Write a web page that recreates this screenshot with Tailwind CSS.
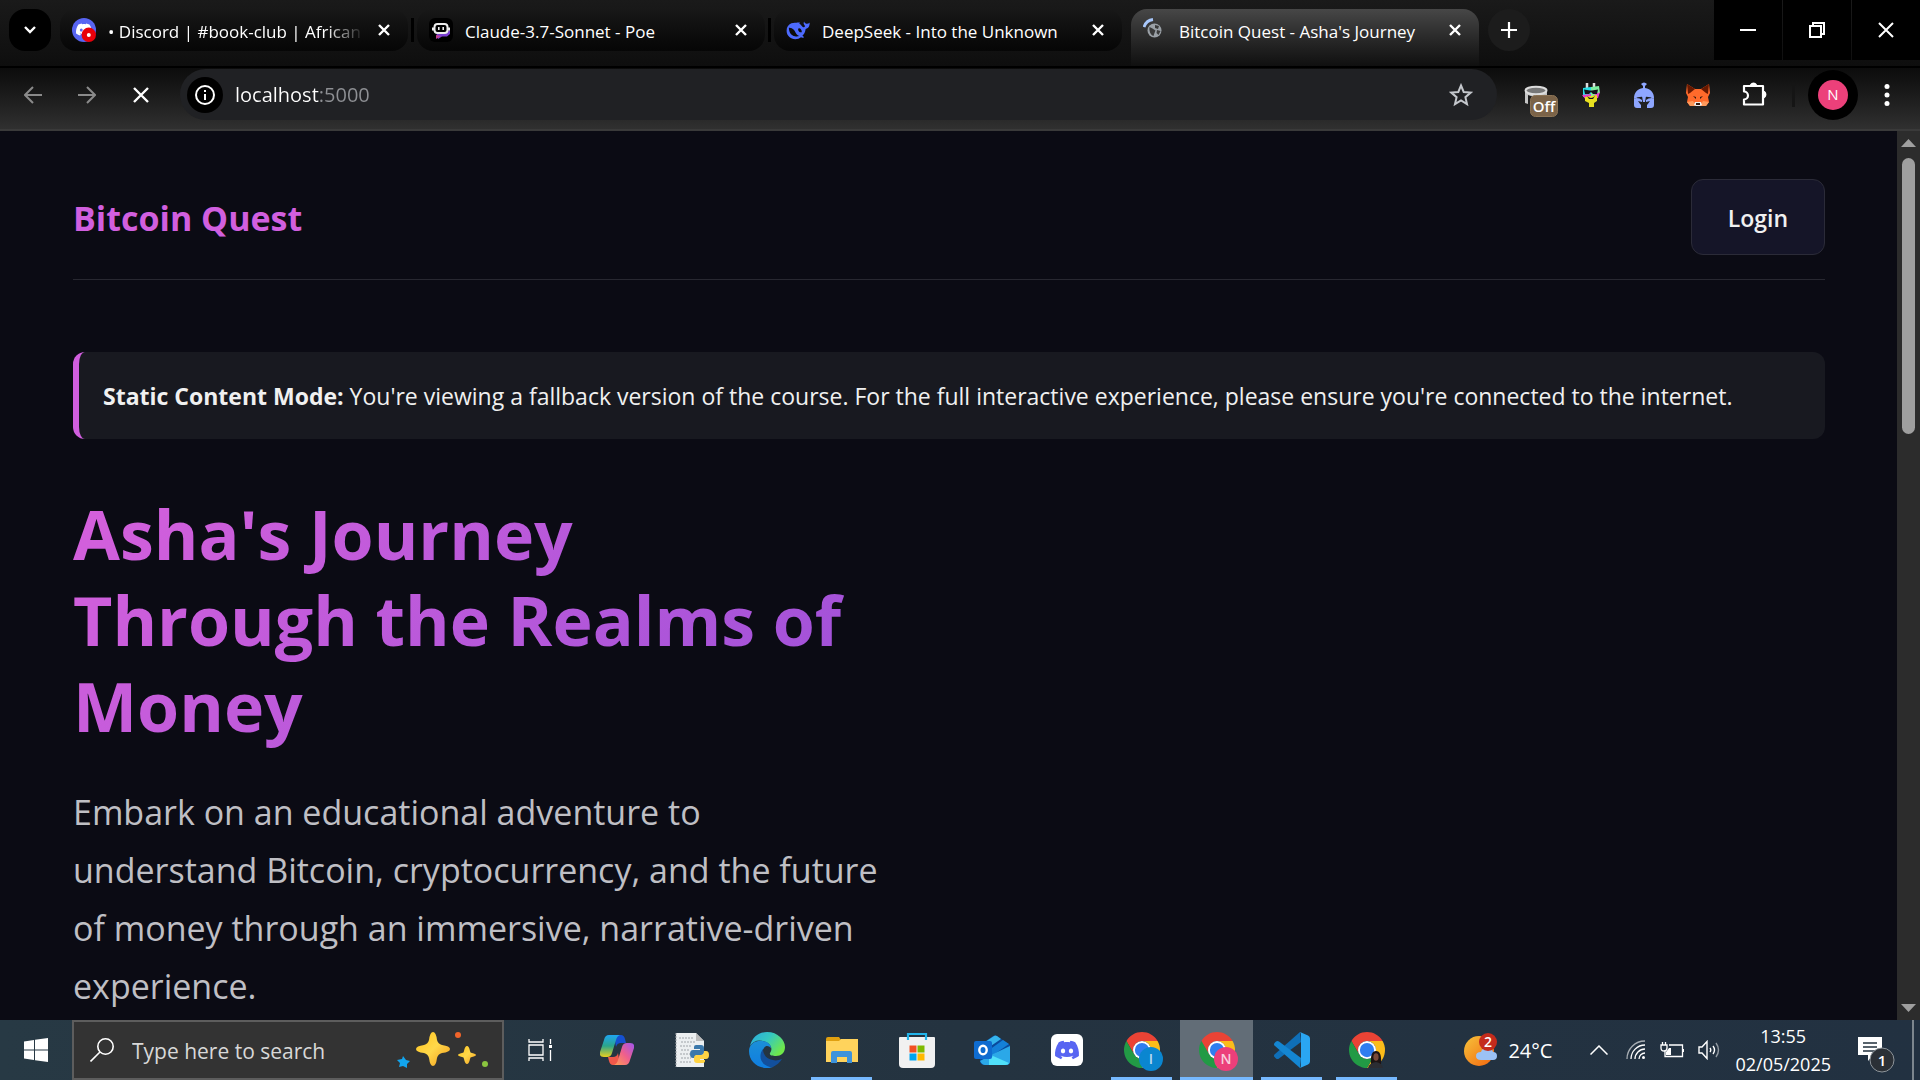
<!DOCTYPE html>
<html lang="en">
<head>
<meta charset="utf-8">
<title>Bitcoin Quest - Asha's Journey</title>
<script src="https://cdn.jsdelivr.net/npm/@tailwindcss/browser@4"></script>
</head>
<body class="flex h-screen flex-col overflow-hidden bg-[#0b0b14] font-['Segoe_UI','Open_Sans',sans-serif] text-white">

<!-- Tab strip -->
<div class="flex h-[68px] shrink-0 flex-col border-b border-black bg-linear-to-b from-[#1a1a1a] to-[#0e0e0e]">
  <div class="flex flex-1 items-start border-b border-black pl-[9px]">
    <button aria-label="Search tabs" class="mt-[9px] mr-[9px] grid size-[42px] shrink-0 place-items-center rounded-2xl bg-black">
      <svg width="14" height="10" viewBox="0 0 14 10" fill="none" stroke="#fff" stroke-width="2.4"><path d="M2 2l5 5 5-5"/></svg>
    </button>
    <div role="tablist" class="flex">
      <div role="tab" class="mt-[9px] flex h-[42px] w-[348px] items-center rounded-2xl bg-linear-to-b from-[#181818] to-[#060606] px-3">
        <svg class="mr-3 shrink-0" width="24" height="24" viewBox="0 0 24 24"><circle cx="12" cy="12" r="12" fill="#5865f2"/><use href="#discord" fill="#fff" transform="translate(4 3.500) scale(.66)"/><circle cx="16.800" cy="16.800" r="7.200" fill="#e8000b"/><circle cx="16.800" cy="17" r="2" fill="#fff"/></svg>
        <span class="flex-1 pt-[3px] text-[17px] leading-6 whitespace-nowrap mask-r-from-85% mask-r-to-100%">• Discord | #book-club | African</span>
        <button aria-label="Close tab" class="ml-2 grid size-6 shrink-0 place-items-center"><svg width="14" height="14" viewBox="0 0 14 14" stroke="#fff" stroke-width="2.400"><path d="M2 2l10 10M12 2L2 12"/></svg></button>
      </div>
      <div class="mx-[3px] mt-[18px] h-6 w-[3px] bg-black"></div>
      <div role="tab" class="mt-[9px] flex h-[42px] w-[348px] items-center rounded-2xl bg-linear-to-b from-[#181818] to-[#060606] px-3">
        <svg class="mr-3 shrink-0" width="24" height="24" viewBox="0 0 24 24"><rect width="24" height="24" rx="6" fill="#000"/><path d="M7 14h11l3-2v4l-3 2.500h-5l-4 2.500z" fill="#7a3fd0"/><path d="M7 17v4l5-3z" fill="#c0408f"/><rect x="5.500" y="6" width="13" height="9" rx="3" fill="none" stroke="#eee" stroke-width="2"/><path d="M4 9.500v3M20 9.500v3" stroke="#eee" stroke-width="2"/><path d="M9.800 9v3M14.200 9v3" stroke="#eee" stroke-width="1.600"/></svg>
        <span class="flex-1 pt-[3px] text-[17px] leading-6 whitespace-nowrap">Claude-3.7-Sonnet - Poe</span>
        <button aria-label="Close tab" class="ml-2 grid size-6 shrink-0 place-items-center"><svg width="14" height="14" viewBox="0 0 14 14" stroke="#fff" stroke-width="2.400"><path d="M2 2l10 10M12 2L2 12"/></svg></button>
      </div>
      <div class="mx-[3px] mt-[18px] h-6 w-[3px] bg-black"></div>
      <div role="tab" class="mt-[9px] flex h-[42px] w-[348px] items-center rounded-2xl bg-linear-to-b from-[#181818] to-[#060606] px-3">
        <svg class="mr-3 shrink-0" width="24" height="24" viewBox="0 0 24 24"><path fill="#4d6bfe" fill-rule="evenodd" d="M23.700 4.800c-.300-.100-.500.200-1.400.800-1 .300-2 .100-2.900-.400-.700-.400-1-.800-1.200-1.800-.600.800-.700 1.900-.300 2.900.300.800.800 1.300 1.200 1.700-.400.900-.900 1.300-1.700 1.200-1.300-.200-2.100-2.700-4.200-3.800l.9-.7c-1-.3-2.400-.3-3.800.1-1.600-.2-3.500-.1-4.900.5C2.200 6.700.6 9.300.6 12.700c0 4.900 3.900 8.500 8.700 8.500 2.300 0 4.200-.7 5.700-1.900.7.5 2.100.5 2.700.1.400-.3.200-.7-.3-.9-.6-.3-.8-.5-1-.7 1.600-1.600 2.700-3.500 3-5.600.1-1.100.4-1.600 1.400-1.800 2-.6 2.900-2.500 2.900-5.600zM13.300 18c-3.500-1.200-3.800-4.300-5.500-6.200-1.400-1.600-3-2.300-4.900-2.100-.1 4.500 2.300 7.700 6.100 8.600 1.500.3 3 .2 4.300-.3zm2.500-3.800c-1.600.6-3.300-.6-3.600-2.300-.2-.9.1-1.700.9-1.600 1.500.1 2.900 1.900 2.700 3.900z"/></svg>
        <span class="flex-1 pt-[3px] text-[17px] leading-6 whitespace-nowrap">DeepSeek - Into the Unknown</span>
        <button aria-label="Close tab" class="ml-2 grid size-6 shrink-0 place-items-center"><svg width="14" height="14" viewBox="0 0 14 14" stroke="#fff" stroke-width="2.400"><path d="M2 2l10 10M12 2L2 12"/></svg></button>
      </div>
      <div role="tab" aria-selected="true" class="mt-[9px] ml-[9px] flex h-[57px] w-[348px] items-center rounded-t-2xl bg-linear-to-b from-[#474747] to-[#101010] px-3 pb-[15px]">
        <svg class="mr-3 shrink-0" width="24" height="24" viewBox="0 0 24 24"><path d="M1 9A11 11 0 0 1 10 1.500" fill="none" stroke="#a8c7fa" stroke-width="2.800"/><circle cx="11.500" cy="12.500" r="7" fill="#9aa0a6"/><path d="M6.500 9l3 1.500 3 2-1 2.500-1 3c-3-1-4.500-5-4-9zM12 7l4 1-1 3-3-1zM14 12l3.500 1-2 4-2-2z" fill="#3a3a3a"/></svg>
        <span class="flex-1 pt-[3px] text-[17px] leading-6 whitespace-nowrap">Bitcoin Quest - Asha's Journey</span>
        <button aria-label="Close tab" class="ml-2 grid size-6 shrink-0 place-items-center"><svg width="14" height="14" viewBox="0 0 14 14" stroke="#fff" stroke-width="2.400"><path d="M2 2l10 10M12 2L2 12"/></svg></button>
      </div>
    </div>
    <button aria-label="New tab" class="mt-[9px] ml-[9px] grid size-[42px] place-items-center rounded-full bg-[#1c1c1c]">
      <svg width="16" height="16" viewBox="0 0 16 16" stroke="#fff" stroke-width="2.200"><path d="M8 0v16M0 8h16"/></svg>
    </button>
    <div class="ml-auto flex h-[60px] gap-px">
      <button aria-label="Minimise" class="grid w-[68px] place-items-center bg-black"><svg width="16" height="16" viewBox="0 0 16 16"><path d="M0 7h16v2H0z" fill="#fff"/></svg></button>
      <button aria-label="Restore" class="grid w-[68px] place-items-center bg-black"><svg width="16" height="16" viewBox="0 0 16 16" fill="none" stroke="#fff" stroke-width="2"><path d="M1 4h11v11H1zM4 4V1h11v11h-3"/></svg></button>
      <button aria-label="Close" class="grid w-[68px] place-items-center bg-black"><svg width="16" height="16" viewBox="0 0 16 16" stroke="#fff" stroke-width="2"><path d="M1 1l14 14M15 1L1 15"/></svg></button>
    </div>
  </div>
</div>

<!-- Toolbar -->
<div class="flex h-[63px] shrink-0 items-start border-b-2 border-[#3a3a3a] bg-linear-to-b from-[#0c0c0c] to-[#303030] pt-px pr-6 pl-[6px]">
  <div class="flex h-[51px] w-[174px] shrink-0">
    <button aria-label="Back" class="grid w-[54px] place-items-center"><svg width="18" height="18" viewBox="0 0 18 18" fill="none" stroke="#8a8a8a" stroke-width="2"><path d="M18 9H1M9 1L1 9l8 8"/></svg></button>
    <button aria-label="Forward" class="grid w-[54px] place-items-center"><svg width="18" height="18" viewBox="0 0 18 18" fill="none" stroke="#8a8a8a" stroke-width="2"><path d="M0 9h17M9 1l8 8-8 8"/></svg></button>
    <button aria-label="Stop loading" class="grid w-[54px] place-items-center"><svg width="16" height="16" viewBox="0 0 16 16" stroke="#fff" stroke-width="2.400"><path d="M1 1l14 14M15 1L1 15"/></svg></button>
  </div>
  <div class="flex h-[51px] flex-1 items-center rounded-full bg-[#202124] pr-[24px] pl-[7px]">
    <button aria-label="Site information" class="grid size-9 shrink-0 place-items-center rounded-full bg-black">
      <svg width="20" height="20" viewBox="0 0 20 20" fill="none" stroke="#fff" stroke-width="2"><circle cx="10" cy="10" r="9"/><path d="M10 9v6M10 5v2"/></svg>
    </button>
    <input aria-label="Address" value="localhost:5000" class="ml-3 min-w-0 flex-1 bg-linear-to-r from-white from-[84px] to-[#8e9094] to-[84px] bg-clip-text text-xl text-transparent outline-none">
    <button aria-label="Bookmark this tab" class="grid size-6 shrink-0 place-items-center"><svg width="24" height="24" viewBox="0 0 24 24" fill="none" stroke="#c4c7cc" stroke-width="2"><path d="M12 2.500l2.700 6.500 7 .600-5.300 4.600 1.600 6.900-6-3.700-6 3.700 1.600-6.900-5.300-4.600 7-.600z"/></svg></button>
  </div>
  <div class="ml-[13px] flex h-[51px] items-center">
    <button aria-label="Extension, off" class="flex w-[54px] justify-end pt-3 pr-[5px]">
      <svg width="36" height="34" viewBox="0 0 36 34"><path d="M2 7v12l3 1V11q8 4 19 0V7z" fill="#c4c4c4"/><ellipse cx="13" cy="6.500" rx="10.500" ry="3.800" fill="#777" stroke="#ddd" stroke-width="2"/><rect x="7.500" y="11.500" width="27" height="21" rx="5" fill="#7b6348" stroke="#8b7355"/><text x="21" y="27.500" font-size="15" font-weight="600" fill="#fff" text-anchor="middle">Off</text></svg>
    </button>
    <button aria-label="Rainbow llama extension" class="grid w-[53px] place-items-center">
      <svg width="20" height="26" viewBox="0 0 20 26"><path d="M6 1v6M13 1v6" stroke="#ddd" stroke-width="2.500"/><path d="M2 6l8-1v8l-8 2z" fill="#25e0e8"/><path d="M10 5l8-1 1 7-9 4z" fill="#7df0a0"/><path d="M1 13l4 5 5-1V12zM19 10l-2 6-5 1 1-4z" fill="#e63cc8"/><path d="M4 15l12-2v6l-3 2v4H8v-4l-4-2z" fill="#e8e020"/><path d="M3 7.500l6 1h2l6-1-1 4.500h-4l-2-2-2 2H4zM6 14q4 4 8 0l-2 3H8z" fill="#14141c"/></svg>
    </button>
    <button aria-label="Helmet wallet extension" class="grid w-[54px] place-items-center">
      <svg width="22" height="26" viewBox="0 0 22 26"><path fill="#8ea6ff" d="M8 2q3-3 6 0l-2 2v2c6 1 9 5 9 10v1q-5-3-10-2-5-1-10 2v-1c0-5 3-9 9-10V4z"/><path fill="#8ea6ff" d="M1 17l2-1q4 0 6 2v2l-4-1q2 3 3 4v3H4q-3 0-3-3zM21 17l-2-1q-4 0-6 2v2l4-1q-2 3-3 4v3h4q3 0 3-3zM9 14h4l-1 6h-2z"/></svg>
    </button>
    <button aria-label="Fox wallet extension" class="grid w-[54px] place-items-center">
      <svg width="24" height="24" viewBox="0 0 24 24"><path d="M1 1l8 5h6l8-5 1 9-2 4 1 5-3 4-5-1-3 1-3-1-5 1-3-4 1-5-2-4z" fill="#ff6a2b"/><path d="M1 1l8 5-5 4-2 1zM23 1l-8 5 5 4 2 1z" fill="#661800"/><path d="M1 19l6-1 3 5-6 0zM23 19l-6-1-3 5 6 0z" fill="#ff9a5c"/><path d="M9 19h6l1 3-2 1h-4l-2-1z" fill="#eee"/><path d="M10 20h4v2h-4zM7 13l3 1v2zM17 13l-3 1v2z" fill="#331a10"/></svg>
    </button>
    <button aria-label="Extensions" class="grid w-[57px] place-items-center">
      <svg width="26" height="26" viewBox="0 0 26 26" fill="none" stroke="#fff" stroke-width="2.200" stroke-linejoin="round"><path d="M3 4h19v18.500H3v-5a4 4 0 0 0 0-8z"/><path d="M10 3a3 3 0 0 1 5 0zM23 10a3 3 0 0 1 0 5z" fill="#fff"/></svg>
    </button>
    <div class="mr-[13px] ml-[10px] h-6 w-[3px] bg-[#151515]"></div>
    <button aria-label="Profile N" class="grid size-[50px] place-items-center rounded-full bg-black"><span class="grid size-[30px] place-items-center rounded-full bg-[#ec407a] text-[15px]">N</span></button>
    <button aria-label="Menu" class="ml-5 grid w-[18px] place-items-center"><svg width="6" height="24" viewBox="0 0 6 24" fill="#fff"><circle cx="3" cy="3.500" r="2.500"/><circle cx="3" cy="12" r="2.500"/><circle cx="3" cy="20.500" r="2.500"/></svg></button>
  </div>
</div>

<!-- Page -->
<div class="flex min-h-0 flex-1">
  <div class="min-w-0 flex-1 overflow-hidden pt-[24px] pr-[72px] pl-[73px] text-[#f0f0f0]">
    <header class="flex items-center justify-between border-b border-[#282831] py-6">
      <a href="#" class="pt-[2px] text-[34px] leading-[58px] font-bold text-[#d15fdf]">Bitcoin Quest</a>
      <button class="rounded-xl border border-[#2b2b38] bg-[#151528] px-9 pt-5 pb-[18px] text-[23px] leading-9 font-semibold">Login</button>
    </header>
    <div role="status" class="mt-[72px] rounded-xl border-l-6 border-[#d15fdf] bg-[#181920] px-6 pt-[25px] pb-[23px] text-[23px] leading-[39px]"><strong>Static Content Mode:</strong> You're viewing a fallback version of the course. For the full interactive experience, please ensure you're connected to the internet.</div>
    <main class="mt-12 grid grid-cols-2 gap-30">
      <div>
        <h1 class="bg-linear-135 from-[#d660dc] to-[#9b4fd8] bg-clip-text pt-1 pr-6 text-[68px] leading-[86px] font-bold text-transparent">Asha's Journey Through the Realms of Money</h1>
        <p class="mt-[34px] text-[34px] leading-[58px] text-[#bfbfc4]">Embark on an educational adventure to understand Bitcoin, cryptocurrency, and the future of money through an immersive, narrative-driven experience.</p>
      </div>
    </main>
  </div>
  <div class="flex w-[23px] shrink-0 flex-col items-center bg-[#2c2c2c] py-2">
    <svg width="15" height="8" viewBox="0 0 15 8" fill="#9f9f9f"><path d="M7.500 0L15 8H0z"/></svg>
    <div class="my-[11px] flex w-full flex-1 justify-center"><div class="h-[33%] w-[13px] rounded-full bg-[#9f9f9f]"></div></div>
    <svg width="15" height="8" viewBox="0 0 15 8" fill="#9f9f9f"><path d="M0 0h15L7.500 8z"/></svg>
  </div>
</div>

<!-- Taskbar -->
<footer class="flex h-[60px] shrink-0 bg-linear-to-r from-[#273944] via-[#243340] to-[#223141]">
  <button aria-label="Start" class="grid w-[72px] shrink-0 place-items-center"><svg width="24" height="24" viewBox="0 0 24 24" fill="#fff"><path d="M0 3.500L10 2v9.500H0zM11 1.800L24 0v11.500H11zM0 12.500h10V22L0 20.500zM11 12.500h13V24l-13-1.800z"/></svg></button>
  <label class="mr-[2px] flex w-[432px] shrink-0 items-center border-2 border-[#5d5d5d] bg-[#333] pr-3 pl-4">
    <svg width="24" height="24" viewBox="0 0 24 24" fill="none" stroke="#fff" stroke-width="1.600"><circle cx="15.500" cy="8.500" r="7.700"/><path d="M10 14L.500 23.500"/></svg>
    <input type="search" aria-label="Search" placeholder="Type here to search" class="ml-[18px] min-w-0 flex-1 bg-transparent pt-[3px] text-[21px] outline-none placeholder:text-[#d8d8d8]">
    <svg width="94" height="38" viewBox="0 0 94 38"><defs><linearGradient id="gold" x1="0" y1="0" x2="1" y2="1"><stop offset="0" stop-color="#ffc21a"/><stop offset=".5" stop-color="#ffd84a"/><stop offset="1" stop-color="#f29a1a"/></linearGradient></defs><path fill="url(#gold)" d="M37 1q3 0 4 8 1 4 5 5 8 1 8 4t-8 4q-4 1-5 5-1 8-4 8t-4-8q-1-4-5-5-8-1-8-4t8-4q4-1 5-5 1-8 4-8z"/><path fill="url(#gold)" d="M71 15q2 0 3 5 0 2 2 2 4 1 4 2t-4 2q-2 0-2 2-1 5-3 5t-3-5q0-2-2-2-4-1-4-2t4-2q2 0 2-2 1-5 3-5z"/><path fill="#12a5ee" d="M7 25l3 4 4 1-3 3 0 4-4-2-4 1 1-4-3-3 5-1z"/><circle cx="62" cy="4" r="3" fill="#f1642a"/><circle cx="89" cy="33" r="3" fill="#8bc53f"/></svg>
  </label>
  <nav aria-label="Taskbar" class="flex gap-[2px]">
    <button aria-label="Task view" class="grid w-[67px] place-items-center"><svg width="24" height="24" viewBox="0 0 24 24" fill="none" stroke="#fff" stroke-width="1.300"><path d="M1 1v3h14V1M1 7h14v10H1zM1 23v-3h14v3M22.500 1v5M22.500 12v11"/><path d="M21 7h3v3h-3z" fill="#fff" stroke="none"/></svg></button>
    <button aria-label="Copilot" class="ml-[5px] grid w-[73px] place-items-center"><svg width="34" height="30" viewBox="0 0 34 30"><defs><linearGradient id="cpA" x1="0" y1="0" x2="0" y2="1"><stop offset="0" stop-color="#1fa5f2"/><stop offset=".5" stop-color="#2ba58a"/><stop offset="1" stop-color="#e8d020"/></linearGradient><linearGradient id="cpB" x1="1" y1="0" x2="0" y2="1"><stop offset="0" stop-color="#a055f0"/><stop offset=".5" stop-color="#ef5f8c"/><stop offset="1" stop-color="#ffa052"/></linearGradient></defs><path fill="#1550d0" d="M14 0h7q3 0 4 4l1 4h-5q-4 0-5 4z"/><path fill="url(#cpA)" d="M9 0h11q-3 1-4 5l-4 13q-1 4-5 4H4q-5 0-4-5L4 5q1-5 5-5z"/><path fill="#f0584a" d="M20 30h-7q-3 0-4-4l-1-4h5q4 0 5-4z"/><path fill="url(#cpB)" d="M25 30H14q3-1 4-5l4-13q1-4 5-4h3q5 0 4 5l-4 12q-1 5-5 5z"/></svg></button>
    <button aria-label="Python file" class="grid w-[73px] place-items-center"><svg width="34" height="36" viewBox="0 0 34 36"><path d="M1 1h20l8 8v26H1z" fill="#eceff1"/><path d="M1 1v34M4 6h14M6 10h14M5 14h12M6 18h9M5 22h10M6 26h10M5 30h12" stroke="#9ea3a8" stroke-dasharray="2 1"/><path d="M21 1v8h8z" fill="#bbb"/><path fill="#3b78ab" d="M21 13h5q3 0 3 3v4q0 3-3 3h-4q-2 0-2 3h-2q-3 0-3-4t3-4h7v-1h-6v-2q0-2 2-2z"/><path fill="#ffd343" d="M27 31h-5q-3 0-3-3v-2q0-3 3-3h4q3 0 3-4h2q3 0 3 4t-3 4h-6v1h5v1q0 2-3 2z"/></svg></button>
    <button aria-label="Edge" class="grid w-[73px] place-items-center"><svg width="36" height="36" viewBox="0 0 36 36"><defs><linearGradient id="edA" x1="0" y1="0" x2="1" y2=".6"><stop offset="0" stop-color="#2aa8e0"/><stop offset=".5" stop-color="#35c8c0"/><stop offset="1" stop-color="#6fe84a"/></linearGradient><linearGradient id="edB" x1="0" y1="0" x2="0" y2="1"><stop offset="0" stop-color="#1b8fd8"/><stop offset="1" stop-color="#0f7de0"/></linearGradient></defs><path fill="url(#edA)" d="M1 14C3 5 10 0 18 0c11 0 18 8 18 15 0 6-4 9-9 9-4 0-7-1-6-3 3-4 1-9-4-11C10 7 4 9 1 14z"/><path fill="url(#edB)" d="M0 19C0 12 7 8 13 9c6 0 9 4 9 7-2-2-5-3-7 0-5 7-2 18 9 19-3 1-5 1-6 1C8 36 0 29 0 19z"/><path fill="#124f9c" d="M14 17c-6 8-1 18 10 18 4-2 7-5 9-8-3 1-6 2-9 1-6-1-10-5-10-11z"/></svg></button>
    <button aria-label="File Explorer" class="flex w-[73px] flex-col items-center justify-between pt-[15px]"><svg width="32" height="30" viewBox="0 0 32 30"><path d="M0 4q0-2 2-2h11l2 3-2 4H0z" fill="#e0a010"/><path d="M0 6h13l2-2h17v23H0z" fill="#ffd35c"/><path d="M5 28V18q0-2 2-2h17q2 0 2 2v10h-5v-6H11v6z" fill="#3d93dc"/></svg><span class="h-[3px] w-[61px] bg-[#76b9ff]"></span></button>
    <button aria-label="Microsoft Store" class="grid w-[73px] place-items-center"><svg width="36" height="36" viewBox="0 0 36 36"><path d="M0 6q0-1 1-1h34q1 0 1 1v26q0 4-4 4H4q-4 0-4-4z" fill="#f1f1f1"/><path d="M9 8V2h18v6" fill="none" stroke="#22b4ea" stroke-width="2.200"/><path fill="#f25022" d="M10.500 13.500h7v7h-7z"/><path fill="#7fba00" d="M18.500 13.500h7v7h-7z"/><path fill="#00a4ef" d="M10.500 21.500h7v7h-7z"/><path fill="#ffb900" d="M18.500 21.500h7v7h-7z"/></svg></button>
    <button aria-label="Outlook" class="grid w-[73px] place-items-center"><svg width="36" height="30" viewBox="0 0 36 30"><path d="M6 10L19 1q2-1 4 0l13 9v16q0 4-4 4H11q-5 0-5-4z" fill="#0a4a9c"/><path d="M8 9L20 1q1-1 3 0l4 3-16 11z" fill="#35b4ec"/><path d="M15 15L29 5l6 4-16 11z" fill="#1480d8"/><path d="M17 20L36 11v15q0 4-4 4H11q-3 0-5-4z" fill="#2ba8e8"/><path d="M15 24l4-3 16 7q-1 2-4 2H15z" fill="#50e0fa"/><rect y="6" width="18" height="18" rx="2" fill="#0f6cd0"/><ellipse cx="9" cy="15" rx="3.700" ry="4.300" fill="none" stroke="#fff" stroke-width="2.400"/></svg></button>
    <button aria-label="Discord" class="grid w-[73px] place-items-center"><svg width="32" height="32" viewBox="0 0 32 32"><defs><path id="discord" d="M20.317 4.370a19.791 19.791 0 0 0-4.885-1.515.074.074 0 0 0-.079.037c-.211.375-.445.865-.608 1.250-1.845-.276-3.680-.276-5.487 0-.164-.393-.406-.874-.618-1.250a.077.077 0 0 0-.079-.037A19.736 19.736 0 0 0 3.677 4.370a.070.070 0 0 0-.032.028C.533 9.046-.319 13.580.099 18.058a.082.082 0 0 0 .031.056c2.053 1.508 4.041 2.423 5.993 3.029a.078.078 0 0 0 .084-.028c.462-.630.873-1.295 1.226-1.994a.076.076 0 0 0-.042-.106c-.653-.248-1.274-.550-1.872-.892a.077.077 0 0 1-.008-.128c.126-.094.252-.192.372-.291a.074.074 0 0 1 .078-.011c3.928 1.793 8.180 1.793 12.061 0a.074.074 0 0 1 .079.010c.120.099.246.198.373.292a.077.077 0 0 1-.007.128 12.299 12.299 0 0 1-1.873.891.077.077 0 0 0-.041.107c.360.698.772 1.363 1.225 1.993a.076.076 0 0 0 .084.029c1.961-.607 3.950-1.522 6.002-3.029a.077.077 0 0 0 .031-.055c.500-5.177-.838-9.674-3.549-13.660a.061.061 0 0 0-.031-.029zM8.020 15.331c-1.183 0-2.157-1.086-2.157-2.419s.956-2.419 2.157-2.419c1.211 0 2.176 1.095 2.157 2.419 0 1.333-.956 2.419-2.157 2.419zm7.975 0c-1.183 0-2.157-1.086-2.157-2.419s.955-2.419 2.157-2.419c1.211 0 2.176 1.095 2.157 2.419 0 1.333-.946 2.419-2.157 2.419z"/></defs><rect width="32" height="32" rx="6" fill="#fff"/><use href="#discord" fill="#5865f2" transform="translate(4 4)"/></svg></button>
    <button aria-label="Chrome, profile I" class="flex w-[73px] flex-col items-center justify-between pt-[6px]"><svg width="48" height="48" viewBox="0 0 48 48"><defs><g id="chrome"><path fill="#ea4335" d="M24 12h20.780A24 24 0 0 0 3.220 12l10.390 18A12 12 0 0 1 24 12z"/><path fill="#fbbc1a" d="M34.390 30L24 48A24 24 0 0 0 44.780 12H24a12 12 0 0 1 10.390 18z"/><path fill="#229a45" d="M13.610 30L3.220 12A24 24 0 0 0 24 48l10.390-18a12 12 0 0 1-20.780 0z"/><circle cx="24" cy="24" r="12" fill="#fff"/><circle cx="24" cy="24" r="9.500" fill="#2f7df0"/></g></defs><use href="#chrome" transform="translate(6 6) scale(.75)"/><circle cx="33" cy="33" r="12" fill="#0a86d0"/><text x="33" y="38" font-size="14" font-weight="600" fill="#b8dcf2" text-anchor="middle">I</text></svg><span class="h-[3px] w-[61px] bg-[#76b9ff]"></span></button>
    <button aria-label="Chrome, profile N" class="flex w-[73px] flex-col items-center justify-between bg-[#626d77] pt-[6px]"><svg width="48" height="48" viewBox="0 0 48 48"><use href="#chrome" transform="translate(6 6) scale(.75)"/><circle cx="33" cy="33" r="12" fill="#ec3f7a"/><text x="33" y="38" font-size="14" font-weight="600" fill="#f8cfdd" text-anchor="middle">N</text></svg><span class="h-[3px] w-full bg-[#76b9ff]"></span></button>
    <button aria-label="Visual Studio Code" class="flex w-[73px] flex-col items-center justify-between pt-3"><svg width="36" height="36" viewBox="0 0 36 36"><path fill="#0f6fb8" d="M26 0l1 10L5 26.500q-1.500 1-3 0L.500 25q-1-1.500 0-2.500z"/><path fill="#1486d2" d="M26 36l1-10L5 9.500q-1.500-1-3 0L.500 11q-1 1.500 0 2.500z"/><path fill="#2aa6f2" d="M26 0l8 3.500q2 1 2 3v23q0 2-2 3L26 36q1-1 1-3V3q0-2-1-3z"/></svg><span class="h-[3px] w-[61px] bg-[#76b9ff]"></span></button>
    <button aria-label="Chrome, personal profile" class="flex w-[73px] flex-col items-center justify-between pt-[6px]"><svg width="48" height="48" viewBox="0 0 48 48"><use href="#chrome" transform="translate(6 6) scale(.75)"/><path d="M28 38q-1-13 5-13t5 13z" fill="#1c1414"/><ellipse cx="33" cy="31" rx="2.600" ry="3.800" fill="#7a4a38"/><path d="M25 42q1-5 8-6 6 1 7 6z" fill="#2b2d33"/></svg><span class="h-[3px] w-[61px] bg-[#76b9ff]"></span></button>
  </nav>
  <div class="ml-auto flex items-center">
    <button class="flex items-center gap-[10px] text-xl"><svg width="34" height="34" viewBox="0 0 34 34"><defs><linearGradient id="sun" x1="0" y1="0" x2="1" y2="1"><stop offset="0" stop-color="#f7c33a"/><stop offset="1" stop-color="#f2650f"/></linearGradient></defs><circle cx="15" cy="18" r="15" fill="url(#sun)"/><path d="M17 27q-5 0-5-4t5-4q1-4 6-4t6 4q4 0 4 4t-4 4z" fill="#9cc2f5"/><circle cx="24" cy="9" r="9" fill="#c42b1c"/><text x="24" y="14" font-size="14" font-weight="600" fill="#fff" text-anchor="middle">2</text></svg><span class="pt-[2px]">24°C</span></button>
    <div class="ml-[38px] flex items-center gap-[14px]">
      <button aria-label="Show hidden icons"><svg class="mr-1" width="18" height="10" viewBox="0 0 18 10" fill="none" stroke="#fff" stroke-width="1.500"><path d="M.500 9.500L9 1l8.500 8.500"/></svg></button>
      <button aria-label="Network"><svg width="20" height="20" viewBox="0 0 20 20" fill="none" stroke="#fff" stroke-width="1.300"><path d="M1 19A18 18 0 0 1 19 1" opacity=".6"/><path d="M5 19A14 14 0 0 1 19 5M9 19A10 10 0 0 1 19 9M13 19a6 6 0 0 1 6-6"/><circle cx="17.500" cy="17.500" r="1.500" fill="#fff" stroke="none"/></svg></button>
      <button aria-label="Battery"><svg width="24" height="18" viewBox="0 0 24 18" fill="none" stroke="#fff" stroke-width="1.300"><path d="M9 4h13.500v11.500H5V10M23.500 8v3M1 4h6v3q0 3-3 3t-3-3zM2.500 1v3M5.500 1v3"/><path d="M6 11l3-4h2v7H6z" fill="#fff" stroke="none"/></svg></button>
      <button aria-label="Volume"><svg width="23" height="20" viewBox="0 0 23 20" fill="none" stroke="#fff" stroke-width="1.400"><path d="M1 7h3l5-5.500v17L4 13H1zM12 8q1.500 2 0 4M15 6q3 4 0 8"/><path d="M18 3q5 7 0 14" opacity=".5"/></svg></button>
    </div>
    <time class="ml-[14px] flex flex-col items-center text-lg leading-7"><span>13:55</span><span>02/05/2025</span></time>
    <button aria-label="Notifications, 1 new" class="ml-[26px] pt-[7px]"><svg width="38" height="38" viewBox="0 0 38 38"><path d="M1 2h24v18H16l-5 6V20H1z" fill="#fff"/><path d="M6 8h14M6 12h14M6 16h14" stroke="#22303c" stroke-width="1.300"/><circle cx="25" cy="25" r="12" fill="#2b3036" stroke="#8d949a" stroke-width="1"/><text x="25" y="30.500" font-size="15" font-weight="600" fill="#fff" text-anchor="middle">1</text></svg></button>
    <div class="mr-[6px] ml-[17px] h-[60px] w-[2px] bg-[#7c868e]"></div>
  </div>
</footer>
</body>
</html>
